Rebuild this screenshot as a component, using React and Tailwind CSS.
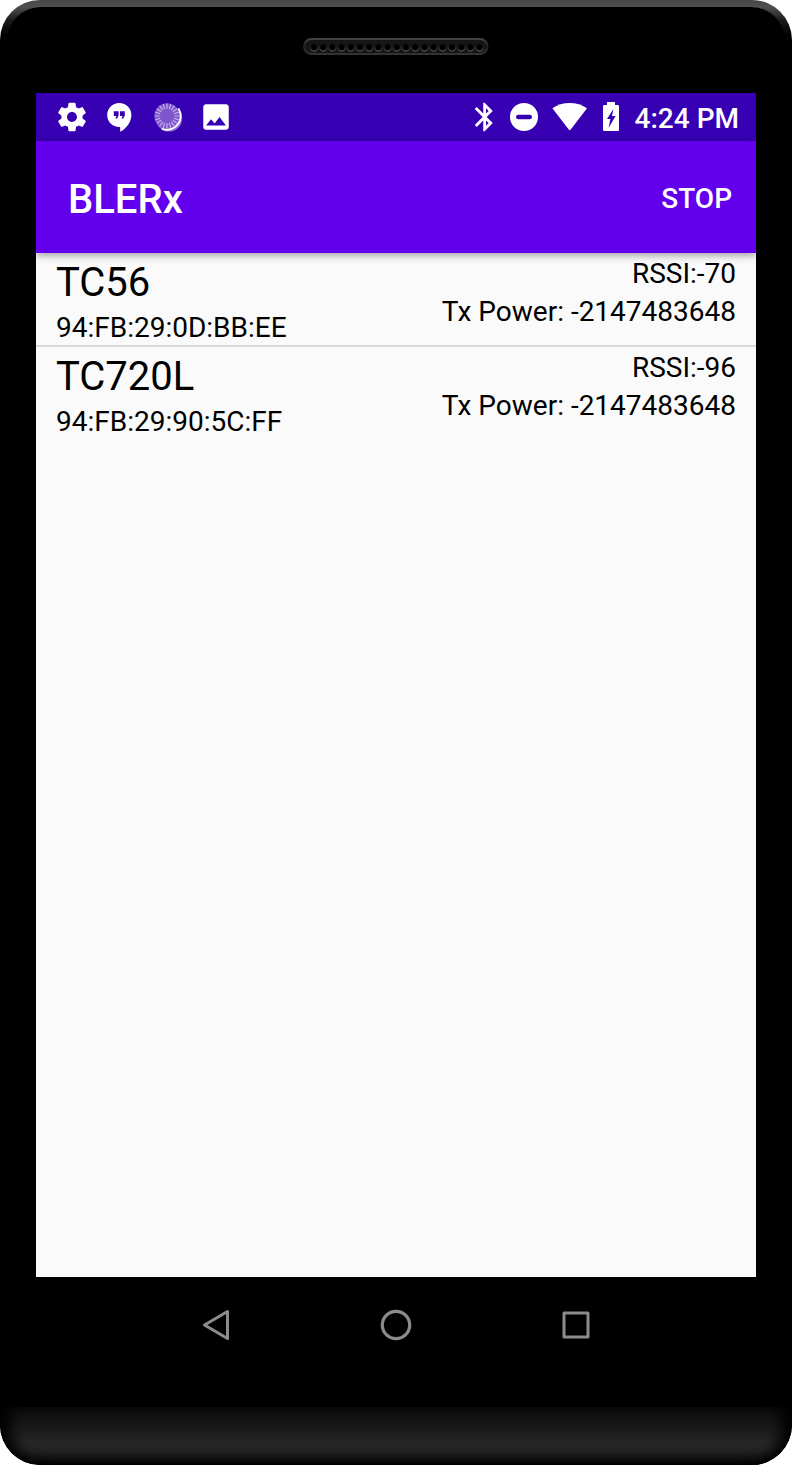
const devices = [
  { name: "TC56", address: "94:FB:29:0D:BB:EE", rssi: -70, txPower: -2147483648 },
  { name: "TC720L", address: "94:FB:29:90:5C:FF", rssi: -96, txPower: -2147483648 },
];

function SpeakerGrille() {
  return (
    <svg width="186" height="18" viewBox="0 0 186 18" aria-hidden="true">
      <defs>
        <linearGradient id="grille-edge" x1="0" y1="0" x2="0" y2="1">
          <stop offset="0" stopColor="#444444" />
          <stop offset="0.5" stopColor="#202020" />
          <stop offset="1" stopColor="#333333" />
        </linearGradient>
        <linearGradient id="grille-hole" x1="0" y1="0" x2="0" y2="1">
          <stop offset="0" stopColor="#141414" />
          <stop offset="0.5" stopColor="#242424" />
          <stop offset="1" stopColor="#666666" />
        </linearGradient>
      </defs>
      <rect x="1" y="1" width="183.5" height="15" rx="7.5" fill="#151515" stroke="url(#grille-edge)" strokeWidth="2" />
      {Array.from({ length: 19 }, (_, i) => (
        <circle key={i} cx={11 + i * 9.2} cy="9.4" r="3.6" fill="#000000" stroke="url(#grille-hole)" strokeWidth="1.1" />
      ))}
    </svg>
  );
}

function GearIcon() {
  return (
    <svg className="size-[34px]" viewBox="0 0 24 24" fill="#ffffff" aria-hidden="true">
      <path d="M19.43 12.98c.04-.32.07-.64.07-.98s-.03-.66-.07-.98l2.11-1.65c.19-.15.24-.42.12-.64l-2-3.46c-.12-.22-.39-.3-.61-.22l-2.49 1c-.52-.4-1.08-.73-1.69-.98l-.38-2.65C14.46 2.18 14.25 2 14 2h-4c-.25 0-.46.18-.49.42l-.38 2.65c-.61.25-1.17.59-1.69.98l-2.49-1c-.23-.09-.49 0-.61.22l-2 3.46c-.13.22-.07.49.12.64l2.11 1.65c-.04.32-.07.65-.07.98s.03.66.07.98l-2.11 1.65c-.19.15-.24.42-.12.64l2 3.46c.12.22.39.3.61.22l2.49-1c.52.4 1.08.73 1.69.98l.38 2.65c.03.24.24.42.49.42h4c.25 0 .46-.18.49-.42l.38-2.65c.61-.25 1.17-.59 1.69-.98l2.49 1c.23.09.49 0 .61-.22l2-3.46c.12-.22.07-.49-.12-.64l-2.11-1.65zM12 15.5c-1.93 0-3.5-1.57-3.5-3.5s1.57-3.5 3.5-3.5 3.5 1.57 3.5 3.5-1.57 3.5-3.5 3.5z" />
    </svg>
  );
}

function ChatIcon() {
  return (
    <svg className="size-[34px]" viewBox="0 0 34 34" aria-hidden="true">
      <path d="M16.3 3C9.6 3 4.2 8.4 4.2 15s5.2 12 12 12h1v4.8C23.6 28.6 28.4 21.8 28.4 15 28.4 8.4 23 3 16.3 3z" fill="#ffffff" />
      <path d="M10.8 11.2h4.8v4.4l-1.5 3h-1.900l1.300-2.600h-2.700zM17 11.200h4.800v4.400l-1.500 3h-1.900l1.300-2.600H17z" fill="#3700b3" />
    </svg>
  );
}

function SpinnerIcon() {
  return (
    <svg className="size-[34px]" viewBox="0 0 34 34" aria-hidden="true">
      <circle cx="18" cy="18.400" r="13.200" fill="#8f6fd6" />
      <path d="M27.500 8.500C33 20 23 32 11 28.800 23.500 33.500 34.500 20 27.500 8.500z" fill="#ffffff" stroke="#ffffff" strokeWidth="1.800" />
      <circle cx="16" cy="16" r="12.700" fill="#7e55cc" />
      {Array.from({ length: 20 }, (_, i) => (
        <path key={i} d="M16 3.600v5.200" stroke="#c2b0ea" strokeWidth="1.200" transform={`rotate(${i * 18} 16 16)`} />
      ))}
    </svg>
  );
}

function ImageIcon() {
  return (
    <svg className="size-[34px]" viewBox="0 0 24 24" fill="#ffffff" aria-hidden="true">
      <path d="M21 19V5c0-1.100-.9-2-2-2H5c-1.100 0-2 .9-2 2v14c0 1.100.9 2 2 2h14c1.100 0 2-.9 2-2zM8.500 13.500l2.500 3.010L14.500 12l4.500 6H5l3.500-4.500z" />
    </svg>
  );
}

function BluetoothIcon() {
  return (
    <svg className="h-[34px] w-[22px]" viewBox="4.5 0 15.5 24" fill="#ffffff" aria-hidden="true">
      <path d="M17.710 7.710L12 2h-1v7.590L6.410 5 5 6.410 10.590 12 5 17.590 6.410 19 11 14.410V22h1l5.710-5.710-4.300-4.290 4.300-4.290zM13 5.830l1.880 1.880L13 9.590V5.830zm1.880 10.460L13 18.170v-3.760l1.880 1.880z" />
    </svg>
  );
}

function DoNotDisturbIcon() {
  return (
    <svg className="h-[34px] w-7" viewBox="0 0 28 34" aria-hidden="true">
      <circle cx="14" cy="17" r="14" fill="#ffffff" />
      <rect x="6" y="14.800" width="16" height="4.400" rx="2.200" fill="#3700b3" />
    </svg>
  );
}

function WifiIcon() {
  return (
    <svg className="h-[34px] w-[37px]" viewBox="0 0 37 34" aria-hidden="true">
      <path d="M.4 8.200C5.300 4.800 11.200 3 17.600 3s12.300 1.800 17.400 5.200L18.700 29.400q-1 1.200-2 0z" fill="#ffffff" />
    </svg>
  );
}

function BatteryIcon() {
  return (
    <svg className="h-[34px] w-[18px]" viewBox="0 0 18 34" aria-hidden="true">
      <path d="M4 2h8v3h2.800Q16 5 16 6.200v23.600Q16 31 14.800 31H1.200Q0 31 0 29.800V6.200Q0 5 1.200 5H4z" fill="#ffffff" />
      <path d="M10.400 9L4 19h3.400l-1.900 9L12.600 16H9z" fill="#3700b3" />
    </svg>
  );
}

function StatusBar() {
  return (
    <div className="flex h-12 items-center justify-between bg-[#3700b3] pr-[17px] pl-[19px]">
      <div className="flex items-center gap-[14px]">
        <GearIcon />
        <ChatIcon />
        <SpinnerIcon />
        <ImageIcon />
      </div>
      <div className="flex items-center gap-[14px]">
        <BluetoothIcon />
        <DoNotDisturbIcon />
        <WifiIcon />
        <BatteryIcon />
        <time className="pt-1 text-[28px] leading-8 font-medium text-white">4:24 PM</time>
      </div>
    </div>
  );
}

function DeviceRow({ device }) {
  return (
    <li className="flex justify-between px-5">
      <div className="pt-0.5">
        <h2 className="text-[40px] leading-14">{device.name}</h2>
        <p className="text-[28px] leading-[34px]">{device.address}</p>
      </div>
      <div className="pt-0.5 text-right text-[28px] leading-[38px]">
        <p>RSSI:{device.rssi}</p>
        <p>Tx Power: {device.txPower}</p>
      </div>
    </li>
  );
}

function NavigationBar() {
  return (
    <nav className="mx-auto grid h-24 w-full max-w-[540px] grid-cols-3">
      <button type="button" aria-label="Back" className="flex items-center justify-center">
        <svg className="size-10" viewBox="0 0 40 40" fill="none" stroke="#8c8c8c" strokeWidth="3" strokeLinejoin="round">
          <path d="M8.500 20L31.500 6.500v27z" />
        </svg>
      </button>
      <button type="button" aria-label="Home" className="flex items-center justify-center">
        <svg className="size-10" viewBox="0 0 40 40" fill="none" stroke="#8c8c8c" strokeWidth="3.2">
          <circle cx="20" cy="20" r="13.700" />
        </svg>
      </button>
      <button type="button" aria-label="Recent apps" className="flex items-center justify-center">
        <svg className="size-10" viewBox="0 0 40 40" fill="none" stroke="#8c8c8c" strokeWidth="3" strokeLinejoin="round">
          <rect x="8" y="8" width="24" height="24" />
        </svg>
      </button>
    </nav>
  );
}

export default function App() {
  return (
    <div className="min-h-screen bg-white font-[Roboto,sans-serif]">
      <div className="flex min-h-screen flex-col overflow-hidden rounded-[40px] bg-black bg-[linear-gradient(to_bottom,#464646_0px,#505050_7px,#1c1c1c_20px,#000000_36px)]">
        <div className="mx-[7px] mt-[7px] flex h-[86px] justify-center rounded-t-[34px] bg-black pt-[31px]">
          <SpeakerGrille />
        </div>
        <div className="mx-9 flex flex-1 flex-col overflow-hidden bg-[#fafafa] text-black">
          <StatusBar />
          <header className="relative flex h-28 items-center justify-between bg-[#6200ee] pt-1 pr-6 pl-8 text-white shadow-[0_2px_8px_rgba(0,0,0,0.4)]">
            <h1 className="pt-0.5 text-[40px] leading-[48px] font-medium">BLERx</h1>
            <button type="button" className="text-[28px] leading-8 font-medium">
              STOP
            </button>
          </header>
          <main>
            <ul className="divide-y-2 divide-[#dadada]">
              {devices.map((device) => (
                <DeviceRow key={device.address} device={device} />
              ))}
            </ul>
          </main>
        </div>
        <NavigationBar />
        <div className="mt-[34px] h-[58px] rounded-b-[40px] bg-[linear-gradient(to_bottom,#0c0c0c_0%,#161616_30%,#262626_62%,#222222_75%,#0c0c0c_94%,#000000_100%)] shadow-[inset_16px_0_14px_-6px_#000000,inset_-16px_0_14px_-6px_#000000]" />
      </div>
    </div>
  );
}
